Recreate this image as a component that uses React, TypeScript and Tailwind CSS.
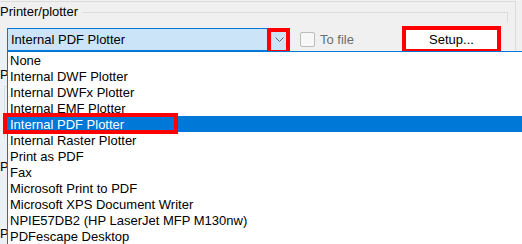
import React from 'react';

const PRINTERS = [
  'None',
  'Internal DWF Plotter',
  'Internal DWFx Plotter',
  'Internal EMF Plotter',
  'Internal PDF Plotter',
  'Internal Raster Plotter',
  'Print as PDF',
  'Fax',
  'Microsoft Print to PDF',
  'Microsoft XPS Document Writer',
  'NPIE57DB2 (HP LaserJet MFP M130nw)',
  'PDFescape Desktop',
];

const SELECTED = 'Internal PDF Plotter';

function Chevron() {
  return (
    <svg width="9" height="5" viewBox="0 0 9 5" fill="none" stroke="#606060" strokeWidth="1">
      <path d="M0.5 0.5 L4.5 4.5 L8.5 0.5" />
    </svg>
  );
}

export default function App() {
  return (
    <div
      className="relative w-[522px] h-[244px] overflow-hidden bg-[#f0f0f0] text-[13px] leading-[16px] text-black"
      style={{ fontFamily: '"Liberation Sans", Arial, sans-serif' }}
    >
      {/* Dialog underneath */}
      <div className="flex flex-col w-[516px] h-full border-t border-r border-[#dcdcdc] mt-[1px]">
        {/* Group header */}
        <div className="flex items-center h-[20px] pr-[7px]">
          <span className="pr-[4px]">Printer/plotter</span>
          <div className="flex-1 h-[1px] bg-[#dcdcdc] mt-[1px]"></div>
          <div className="w-[1px] h-[10px] bg-[#dcdcdc] self-end"></div>
        </div>

        {/* Combo row */}
        <div className="flex items-center h-[23px] mt-[6px] pl-[7px]">
          <div className="flex items-center w-[281px] h-[23px] border border-[#0078d7] bg-[#cce4f7]">
            <span className="flex-1 pl-[3px] pt-[1px]">{SELECTED}</span>
            <div className="relative flex items-center justify-center w-[16px] h-full">
              <Chevron />
              <div className="absolute -left-[4px] -top-[1px] w-[23px] h-[26px] border-4 border-[#ff0000]"></div>
            </div>
          </div>

          <div className="flex items-center gap-[5px] ml-[12px] text-[#6d6d6d]">
            <div className="w-[15px] h-[15px] rounded-[2px] border border-[#bcbcbc] bg-[#f7f7f7]"></div>
            <span className="pt-[1px]">To file</span>
          </div>

          <div className="flex items-center justify-center w-[99px] h-[27px] ml-auto mr-[14px] pt-[1px] border-4 border-[#ff0000] bg-white">
            Setup...
          </div>
        </div>

        {/* Rest of the dialog, mostly hidden under the list */}
        <div className="flex flex-col w-[7px] overflow-hidden pt-[16px] whitespace-nowrap">
          <span>P</span>
          <div className="ml-[4px] mt-[3px] h-[52px] w-[3px] border-l border-t border-[#dcdcdc]"></div>
          <span className="mt-[21px]">P</span>
          <span className="mt-[51px]">P</span>
        </div>
      </div>

      {/* Open dropdown list */}
      <div className="absolute left-[7px] top-[51px] w-[530px] h-[210px] border border-[#0078d7] bg-white">
        <ul className="flex flex-col">
          {PRINTERS.map((p) => (
            <li
              key={p}
              className={
                p === SELECTED
                  ? 'h-[16px] px-[2px] pt-[1px] whitespace-nowrap bg-[#0078d7] text-white'
                  : 'h-[16px] px-[2px] pt-[1px] whitespace-nowrap'
              }
            >
              {p}
            </li>
          ))}
        </ul>
      </div>

      {/* Highlight marker around the selected item */}
      <div className="absolute left-[3px] top-[113px] w-[175px] h-[21px] border-4 border-[#ff0000]"></div>
    </div>
  );
}
